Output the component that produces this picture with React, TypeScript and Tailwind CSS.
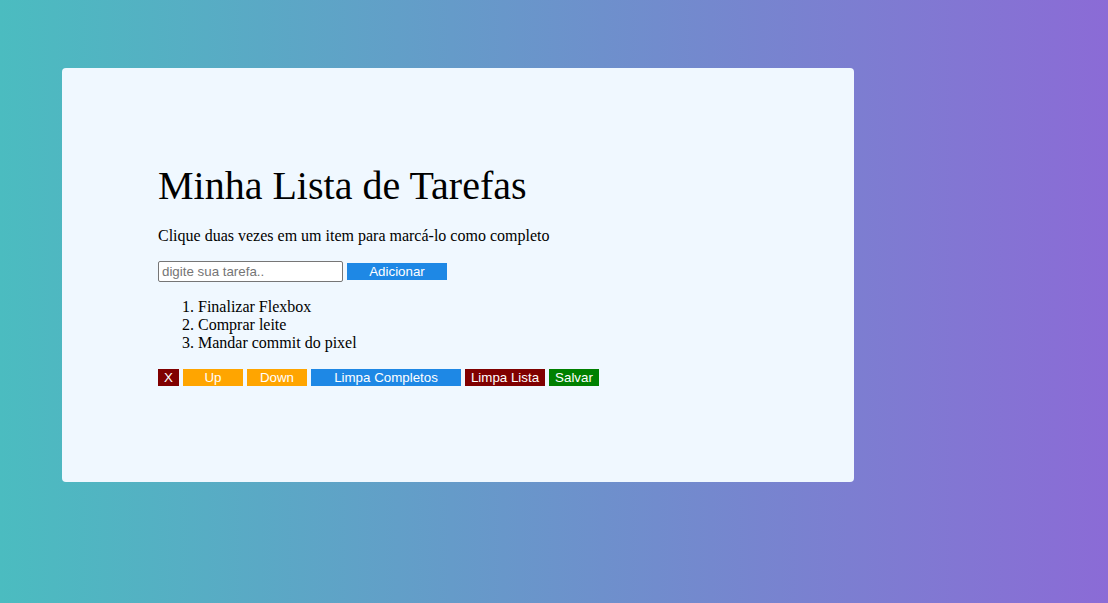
export default function App() {
  const serif = { fontFamily: '"Liberation Serif", "Times New Roman", serif' };
  return (
    <div className="min-h-screen w-full bg-[linear-gradient(to_right,#4bbcc0,#8b6bd6)] pt-[68px] pl-[62px]">
      <div className="w-[792px] rounded-[4px] bg-[#f0f8ff] p-[96px] text-black" style={serif}>
        <h1 className="m-0 text-[40px] leading-[44px] font-normal [font-family:'Liberation_Serif',serif]">Minha Lista de Tarefas</h1>
        <p className="mt-[19px] text-[16px] leading-[18px] [font-family:'Liberation_Serif',serif]">
          Clique duas vezes em um item para marcá-lo como completo
        </p>
        <div className="mt-[16px] flex items-center gap-[4px] [font-family:'Liberation_Sans',Arial,sans-serif]">
          <input
            type="text"
            placeholder="digite sua tarefa.."
            className="box-border h-[21px] w-[185px] rounded-[2px] border border-[#767676] bg-white px-[3px] text-[13.33px] text-black placeholder:text-[#757575] outline-none"
          />
          <button className="h-[17px] w-[100px] bg-[#1e88e5] text-[13.33px] leading-[17px] text-white">Adicionar</button>
        </div>
        <ol className="mt-[16px] list-decimal pl-[40px] text-[16px] leading-[18px] [font-family:'Liberation_Serif',serif]">
          <li>Finalizar Flexbox</li>
          <li>Comprar leite</li>
          <li>Mandar commit do pixel</li>
        </ol>
        <div className="mt-[17px] flex gap-[4px] text-[13.33px] leading-[17px] text-white [font-family:'Liberation_Sans',Arial,sans-serif]">
          <button className="h-[17px] w-[21px] bg-[#800000]">X</button>
          <button className="h-[17px] w-[60px] bg-[#ffa500]">Up</button>
          <button className="h-[17px] w-[60px] bg-[#ffa500]">Down</button>
          <button className="h-[17px] w-[150px] bg-[#1e88e5]">Limpa Completos</button>
          <button className="h-[17px] w-[80px] bg-[#800000]">Limpa Lista</button>
          <button className="h-[17px] w-[50px] bg-[#008000]">Salvar</button>
        </div>
      </div>
    </div>
  );
}
